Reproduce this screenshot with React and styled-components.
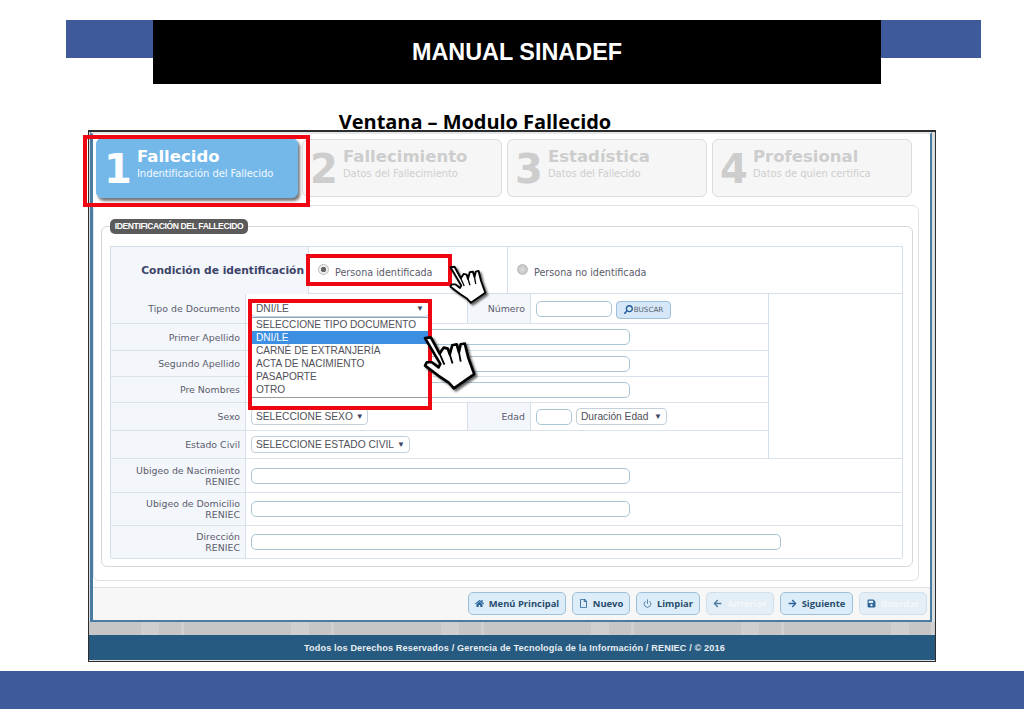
import React from 'react';
import styled, { createGlobalStyle } from 'styled-components';
import { FaHome, FaRegFile, FaArrowLeft, FaArrowRight, FaSave, FaSearch } from 'react-icons/fa';
import { FiPower } from 'react-icons/fi';

const Global = createGlobalStyle`
  html, body { margin: 0; padding: 0; background: #fff; }
  body { width: 1024px; height: 709px; overflow: hidden; font-family: "DejaVu Sans", sans-serif; }
  * { box-sizing: border-box; }
`;

const Slide = styled.div`
  width: 1024px;
  height: 709px;
  display: flex;
  flex-direction: column;
  padding-top: 20px;
`;

const Banner = styled.header`
  margin: 0 43px 0 66px;
  height: 64px;
  padding-left: 87px;
  background: linear-gradient(#3f5a9a, #3f5a9a) top / 100% 38px no-repeat;
`;

const BannerTitle = styled.div`
  width: 728px;
  height: 64px;
  background: #000;
  color: #fff;
  font: bold 23.4px "Liberation Sans", Arial, sans-serif;
  display: flex;
  align-items: center;
  justify-content: center;
`;

const Heading = styled.h1`
  margin: 26px 0 0 0;
  padding-right: 74px;
  height: 20px;
  text-align: center;
  color: #000;
  font: bold 20px/24px "Open Sans", sans-serif;
  letter-spacing: -0.05px;
`;

const Frame = styled.div`
  position: relative;
  width: 848px;
  height: 532px;
  margin-left: 88px;
  border: 1px solid #2d2d2d;
  border-top-width: 2px;
  background: #d9dde0;
  display: flex;
  flex-direction: column;
`;

const Body = styled.div`
  height: 491px;
  margin: 0 3px 0 1px;
  border: 2px solid #4a7ca2;
  border-left-width: 3px;
  border-top: 2px solid #e4e6e8;
  background: #fff;
  display: flex;
  flex-direction: column;
`;

const Steps = styled.div`
  display: flex;
  gap: 5px;
  padding: 4px 0 0 3px;
  height: 71px;
  flex: none;
`;

const Step = styled.div`
  width: ${p => (p.$active ? 202 : 200)}px;
  height: ${p => (p.$active ? 60 : 58)}px;
  margin-top: ${p => (p.$active ? 0 : 1)}px;
  margin-right: ${p => (p.$active ? -1 : 0)}px;
  padding: ${p => (p.$active ? '5px 0 0 7px' : '4px 0 0 7px')};
  border: 1px solid ${p => (p.$active ? '#74b8ea' : '#dcdcdc')};
  border-radius: 6px;
  background: ${p => (p.$active ? '#74b8ea' : '#f6f6f6')};
  box-shadow: ${p => (p.$active ? '2px 3px 3px #777' : 'none')};
  color: ${p => (p.$active ? '#fff' : '#cdcdcd')};
  display: flex;
`;

const StepNumber = styled.div`
  width: 33px;
  flex: none;
  font: bold 40px/50px "DejaVu Sans", sans-serif;
  letter-spacing: -2px;
`;

const StepTitle = styled.div`
  font: bold 16.5px/20px "DejaVu Sans", sans-serif;
  margin-top: 3px;
`;

const StepText = styled.div`
  font: 10px/13px "DejaVu Sans", sans-serif;
  color: ${p => (p.$active ? '#f2f9ff' : '#cfcfcf')};
  letter-spacing: -0.08px;
`;

const Panel = styled.div`
  height: 376px;
  width: 826px;
  padding: 20px 5px 0 7px;
  border: 1px solid #dfe3e6;
  border-radius: 6px;
  flex: none;
`;

const Fieldset = styled.div`
  position: relative;
  width: 812px;
  height: 341px;
  padding: 19px 8px 0;
  border: 1px solid #d4d8dc;
  border-radius: 6px;
`;

const Legend = styled.div`
  position: absolute;
  left: 8px;
  top: -8px;
  width: 138px;
  height: 15px;
  border-radius: 5px;
  background: #5b5b5b;
  color: #fff;
  font: bold 8.6px/15px "Liberation Sans", sans-serif;
  letter-spacing: -0.42px;
  text-align: center;
`;

const Condition = styled.div`
  display: grid;
  grid-template-columns: 198px 199px 1fr;
  height: 47px;
  border: 1px solid #d5dfe9;
  border-bottom: 0;
  width: 793px;
`;

const ConditionLabel = styled.div`
  background: #f3f6fb;
  border-right: 1px solid #d5dfe9;
  color: #3d4468;
  font: bold 10.7px/47px "DejaVu Sans", sans-serif;
  text-align: right;
  padding-right: 4px;
  white-space: nowrap;
`;

const ConditionCell = styled.div`
  display: flex;
  align-items: center;
  gap: 6px;
  padding: 0 0 0 9px;
  color: #5c5c6c;
  font-size: 9.6px;
  border-right: 1px solid #d5dfe9;
  &:last-child { border-right: 0; }
  & > span:last-child { margin-top: 4px; }
`;

const Radio = styled.span`
  width: 11px;
  height: 11px;
  margin-top: -3px;
  border-radius: 50%;
  border: 1px solid #bbb;
  background: ${p => (p.$on ? 'radial-gradient(circle, #666 0 2.4px, #eee 3px)' : 'radial-gradient(circle, #ddd, #bbb)')};
  flex: none;
`;

const FormGrid = styled.div`
  width: 793px;
  display: grid;
  grid-template-columns: 135px 222px 63px 238px 133px;
  grid-template-rows: 30px 27px 26px 26px 28px 28px 34px 33px 33px;
  border: 1px solid #d5dfe9;
  border-width: 1px 1px 2px 1px;
  height: 265px;
`;

const Label = styled.div`
  background: #f3f6fb;
  border-bottom: 1px solid #d9e2ea;
  border-right: 1px solid #d5dfe9;
  display: flex;
  align-items: center;
  justify-content: flex-end;
  padding: 0 5px 0 0;
  color: #5c5c6c;
  font-size: 9.4px;
  line-height: 11px;
  text-align: right;
  white-space: pre-line;
`;

const Field = styled.div`
  position: relative;
  grid-column: span ${p => p.$span || 1};
  border-bottom: 1px solid #d9e2ea;
  border-right: ${p => (p.$span === 4 ? '0' : '1px solid #d5dfe9')};
  display: flex;
  align-items: center;
  gap: 4px;
  padding-left: 5px;
  background: #fff;
`;

const Blank = styled.div`
  grid-row: span 6;
  border-bottom: 1px solid #d9e2ea;
`;

const TextInput = styled.input`
  display: block;
  width: ${p => p.$w}px;
  height: 16px;
  padding: 0;
  border: 1px solid #a9c6d6;
  border-radius: 5px;
  background: #fff;
  outline: none;
`;

const Select = styled.div`
  width: ${p => p.$w}px;
  height: 17px;
  padding: 0 4px;
  border: 1px solid #c6d0da;
  border-radius: 4px;
  background: #fff;
  color: #505058;
  font: 10.2px/15px "Liberation Sans", sans-serif;
  display: flex;
  justify-content: space-between;
  align-items: center;
  white-space: nowrap;
`;

const Arrow = styled.span`
  font-size: 8px;
  color: #3b4560;
  margin-left: 3px;
`;

const OptionList = styled.div`
  position: absolute;
  left: 5px;
  top: 23px;
  width: 180px;
  height: 88px;
  background: #fff;
  z-index: 2;
  border-top: 1px solid #8da6bf;
`;

const Options = styled.div`
  border-bottom: 1px solid #9a9a9a;
  height: 80px;
`;

const Option = styled.div`
  height: 13px;
  padding-left: 5px;
  background: ${p => (p.$on ? '#3c8fe2' : '#fff')};
  color: ${p => (p.$on ? '#fff' : '#505058')};
  font: 10.1px/13px "Liberation Sans", sans-serif;
  white-space: nowrap;
`;

const SearchButton = styled.div`
  width: 55px;
  height: 18px;
  margin-top: 2px;
  border: 1px solid #9cc0d8;
  border-radius: 4px;
  background: #d6e8f7;
  color: #55606e;
  font: 7.2px/16px "DejaVu Sans", sans-serif;
  display: flex;
  align-items: center;
  justify-content: center;
  gap: 1px;
  svg { color: #1f5c9c; transform: scaleX(-1); font-size: 9px; }
`;

const Toolbar = styled.div`
  flex: 1;
  margin-top: 6px;
  border-top: 1px solid #dfe3e6;
  background: #f7f7f7;
  display: flex;
  justify-content: flex-end;
  align-items: flex-start;
  gap: 6px;
  padding: 4px 3px 0 0;
`;

const Button = styled.div`
  height: 23px;
  width: ${p => p.$w}px;
  border: 1px solid ${p => (p.$off ? '#cfe0ec' : '#9cc0d8')};
  border-radius: 5px;
  background: ${p => (p.$off ? '#e4eef6' : '#dcecf8')};
  color: ${p => (p.$off ? '#f4f8fb' : '#274c6e')};
  font: bold 9.4px/21px "Open Sans", sans-serif;
  display: flex;
  align-items: center;
  justify-content: center;
  gap: 5px;
  white-space: nowrap;
  svg { color: ${p => (p.$off && !p.$solid ? '#4a7ba0' : '#2b659a')}; font-size: 9px; flex: none; }
`;

const Band = styled.div`
  height: 13px;
  flex: none;
  background:
    repeating-linear-gradient(90deg, transparent 0 52px, #cfcfcf 52px 70px, transparent 70px 92px, #d0d0d0 92px 95px, transparent 95px 150px),
    #c6c6c6;
`;

const Footer = styled.footer`
  height: 25px;
  flex: none;
  background: #265a80;
  color: #e8eef2;
  font: bold 9.1px/26px "Liberation Sans", sans-serif;
  letter-spacing: 0.16px;
  text-align: center;
  padding-left: 5px;
  margin-bottom: 1px;
`;

const Highlight = styled.div`
  position: absolute;
  left: ${p => p.$x}px;
  top: ${p => p.$y}px;
  width: ${p => p.$w}px;
  height: ${p => p.$h}px;
  border: 4px solid #ee0612;
  z-index: 3;
  pointer-events: none;
`;

const HandMark = styled.svg`
  position: absolute;
  left: ${p => p.$x}px;
  top: ${p => p.$y}px;
  z-index: 4;
  overflow: visible;
  filter: drop-shadow(2px 2px 1px rgba(50, 50, 50, 0.75));
`;

const BottomBand = styled.div`
  height: 38px;
  margin-top: 9px;
  background: #3f5a9a;
  flex: none;
`;

const Hand = ({ x, y, size }) => (
  <HandMark $x={x} $y={y} width={size} height={size * 1.04} viewBox="0 0 54 56">
    <path
      d="M2 3 L7.7 2.3 L16.3 18.3 L20.3 12.3 L24.3 13.3 L26.3 19 L28.7 10 L33 9 L35.3 16.7 L37 9 L41 8.3 L44.3 21.7 L50.3 38.3 L30.3 52.3 L25.3 46.7 L15.3 40 L2 30 L3.7 26.7 L8.7 26.7 L15.3 31.7 L17 28.3 Z"
      fill="#fff"
      stroke="#000"
      strokeWidth="2.6"
      strokeLinejoin="round"
    />
    <path d="M16.3 18.3 L21 29 M26.3 19 L29 28 M35.3 16.7 L37 26" fill="none" stroke="#000" strokeWidth="1.8" />
  </HandMark>
);

const steps = [
  { n: '1', title: 'Fallecido', text: 'Indentificación del Fallecido', active: true },
  { n: '2', title: 'Fallecimiento', text: 'Datos del Fallecimiento' },
  { n: '3', title: 'Estadística', text: 'Datos del Fallecido' },
  { n: '4', title: 'Profesional', text: 'Datos de quien certifica' },
];

const documentos = ['SELECCIONE TIPO DOCUMENTO', 'DNI/LE', 'CARNÉ DE EXTRANJERÍA', 'ACTA DE NACIMIENTO', 'PASAPORTE', 'OTRO'];

const buttons = [
  { label: 'Menú Principal', w: 98, icon: <FaHome /> },
  { label: 'Nuevo', w: 58, icon: <FaRegFile /> },
  { label: 'Limpiar', w: 64, icon: <FiPower /> },
  { label: 'Anterior', w: 68, icon: <FaArrowLeft />, off: true },
  { label: 'Siguiente', w: 73, icon: <FaArrowRight /> },
  { label: 'Guardar', w: 68, icon: <FaSave />, off: true, solid: true },
];

const App = () => (
  <Slide>
    <Global />
    <Banner>
      <BannerTitle>MANUAL SINADEF</BannerTitle>
    </Banner>
    <Heading>Ventana – Modulo Fallecido</Heading>
    <Frame>
      <Body>
        <Steps>
          {steps.map(s => (
            <Step key={s.n} $active={s.active}>
              <StepNumber>{s.n}</StepNumber>
              <div>
                <StepTitle>{s.title}</StepTitle>
                <StepText $active={s.active}>{s.text}</StepText>
              </div>
            </Step>
          ))}
        </Steps>
        <Panel>
          <Fieldset>
            <Legend>IDENTIFICACIÓN DEL FALLECIDO</Legend>
            <Condition>
              <ConditionLabel>Condición de identificación</ConditionLabel>
              <ConditionCell>
                <Radio $on />
                <span>Persona identificada</span>
              </ConditionCell>
              <ConditionCell>
                <Radio />
                <span>Persona no identificada</span>
              </ConditionCell>
            </Condition>
            <FormGrid>
              <Label>Tipo de Documento</Label>
              <Field>
                <Select $w={178}>DNI/LE<Arrow>▼</Arrow></Select>
                <OptionList>
                  <Options>
                    {documentos.map(d => (
                      <Option key={d} $on={d === 'DNI/LE'}>{d}</Option>
                    ))}
                  </Options>
                </OptionList>
              </Field>
              <Label>Número</Label>
              <Field>
                <TextInput $w={76} />
                <SearchButton><FaSearch />BUSCAR</SearchButton>
              </Field>
              <Blank />

              <Label>Primer Apellido</Label>
              <Field $span={3}><TextInput $w={379} /></Field>
              <Label>Segundo Apellido</Label>
              <Field $span={3}><TextInput $w={379} /></Field>
              <Label>Pre Nombres</Label>
              <Field $span={3}><TextInput $w={379} /></Field>

              <Label>Sexo</Label>
              <Field>
                <Select $w={117}>SELECCIONE SEXO<Arrow>▼</Arrow></Select>
              </Field>
              <Label>Edad</Label>
              <Field>
                <TextInput $w={36} />
                <Select $w={91}>Duración Edad<Arrow>▼</Arrow></Select>
              </Field>

              <Label>Estado Civil</Label>
              <Field $span={3}>
                <Select $w={159}>SELECCIONE ESTADO CIVIL<Arrow>▼</Arrow></Select>
              </Field>

              <Label>{'Ubigeo de Nacimiento\nRENIEC'}</Label>
              <Field $span={4}><TextInput $w={379} /></Field>
              <Label>{'Ubigeo de Domicilio\nRENIEC'}</Label>
              <Field $span={4}><TextInput $w={379} /></Field>
              <Label>{'Dirección\nRENIEC'}</Label>
              <Field $span={4}><TextInput $w={530} /></Field>
            </FormGrid>
          </Fieldset>
        </Panel>
        <Toolbar>
          {buttons.map(b => (
            <Button key={b.label} $w={b.w} $off={b.off} $solid={b.solid}>
              {b.icon}
              {b.label}
            </Button>
          ))}
        </Toolbar>
      </Body>
      <Band />
      <Footer>Todos los Derechos Reservados / Gerencia de Tecnología de la Información / RENIEC / © 2016</Footer>

      <Highlight $x={-6} $y={3} $w={227} $h={72} />
      <Highlight $x={217} $y={122} $w={146} $h={32} />
      <Highlight $x={159} $y={167} $w={184} $h={111} />
      <Hand x={360} y={133} size={39} />
      <Hand x={334} y={203} size={55} />
    </Frame>
    <BottomBand />
  </Slide>
);

export default App;
